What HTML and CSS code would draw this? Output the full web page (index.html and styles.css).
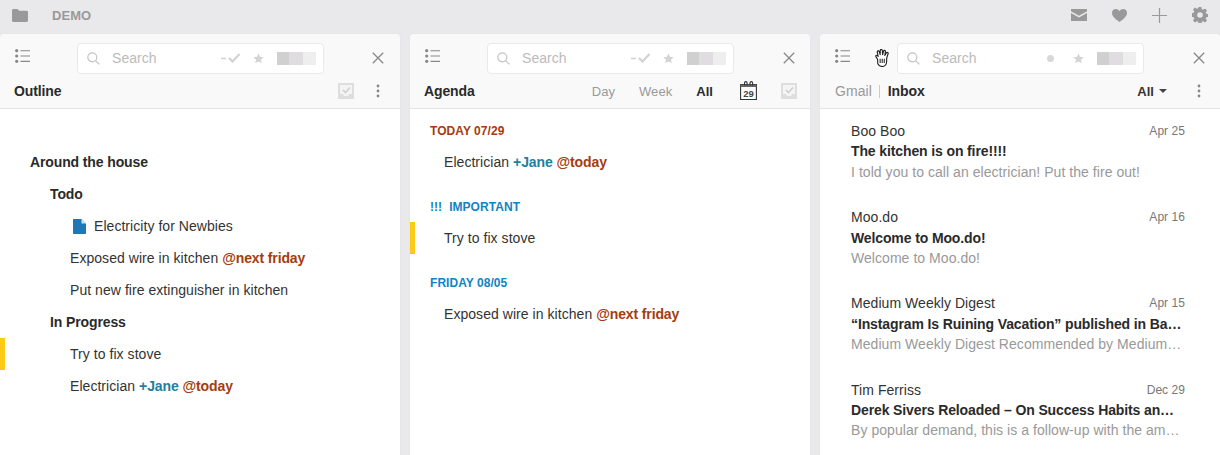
FILE: index.html
```html
<!DOCTYPE html>
<html lang="en">
<head>
  <meta charset="UTF-8" />
  <title>Moo.do</title>
  <link rel="stylesheet" href="styles.css">
</head>
<body>

  <svg class="sprites" width="0" height="0">
    <symbol id="i-list" viewBox="0 0 15 14">
      <circle cx="1.7" cy="1.7" r="1.6" /><circle cx="1.7" cy="7" r="1.6" /><circle cx="1.7" cy="12.3" r="1.6" />
      <path d="M5.500 1.200h9.500v1.100h-9.500zM5.500 6.500h9.500v1.100h-9.500zM5.500 11.800h9.500v1.100h-9.500z" />
    </symbol>
    <symbol id="i-search" viewBox="0 0 13 13">
      <circle cx="5.300" cy="5.300" r="4.500" fill="none" stroke="currentColor" stroke-width="1.200" />
      <path d="M8.600 8.600l3.800 3.800" fill="none" stroke="currentColor" stroke-width="1.300" />
    </symbol>
    <symbol id="i-dashcheck" viewBox="0 0 20 10">
      <path d="M0 5.500h5" fill="none" stroke="currentColor" stroke-width="1.400" />
      <path d="M8 5l3.500 3.500 7-7.500" fill="none" stroke="currentColor" stroke-width="2.200" />
    </symbol>
    <symbol id="i-star" viewBox="0 0 12 12">
      <path d="M6 .5l1.700 3.700 4 .4-3 2.700.9 4L6 9.200l-3.600 2.100.9-4-3-2.700 4-.4z" />
    </symbol>
    <symbol id="i-close" viewBox="0 0 12 12">
      <path d="M.8.8l10.400 10.400M11.200.8L.8 11.200" fill="none" stroke="currentColor" stroke-width="1.300" />
    </symbol>
    <symbol id="i-checkbox" viewBox="0 0 16 16">
      <path d="M0 0h16v16H0z" fill="#dedede" />
      <path d="M2 2h12v9h-3l-1 2H6l-1-2H2z" fill="#f4f4f4" />
      <path d="M5 7l2.500 2.500L12 4.500" fill="none" stroke="#cfcfcf" stroke-width="1.600" />
    </symbol>
    <symbol id="i-kebab" viewBox="0 0 4 14">
      <circle cx="2" cy="2" r="1.400" /><circle cx="2" cy="7" r="1.400" /><circle cx="2" cy="12" r="1.400" />
    </symbol>
  </svg>

  <header class="topbar">
    <svg class="top-folder" width="16" height="13" viewBox="0 0 16 13"><path d="M0 1.500C0 .7.6 0 1.400 0h4.100l1.600 1.800h7.500c.8 0 1.400.6 1.400 1.400v8.400c0 .8-.6 1.400-1.400 1.400H1.400C.6 13 0 12.400 0 11.600z" /></svg>
    <span class="top-name">DEMO</span>
    <div class="top-icons">
      <svg width="16" height="12" viewBox="0 0 16 12"><path d="M0 0h16v2.200L8 6.800 0 2.200zM0 4l8 4.600L16 4v8H0z" /></svg>
      <svg width="15" height="13" viewBox="0 0 15 13"><path d="M7.500 13C3 9.500 0 7 0 3.900 0 1.700 1.700 0 3.800 0c1.500 0 2.900.8 3.700 2.100C8.300.8 9.700 0 11.200 0 13.300 0 15 1.700 15 3.900 15 7 12 9.500 7.500 13z" /></svg>
      <svg width="15" height="15" viewBox="0 0 15 15"><path d="M6.900 0h1.200v6.900H15v1.200H8.100V15H6.900V8.100H0V6.900h6.900z" /></svg>
      <svg width="16" height="16" viewBox="0 0 16 16"><path fill-rule="evenodd" d="M6.600 0h2.800l.4 2.200 1.300.6 1.900-1.300 2 2-1.300 1.900.6 1.300 2.200.4v2.800l-2.200.4-.6 1.300 1.300 1.900-2 2-1.900-1.300-1.300.6-.4 2.200H6.600l-.4-2.200-1.300-.6L3 15.500l-2-2 1.300-1.900-.6-1.300L-.5 9.900V6.100l2.200-.4.6-1.300L1 2.500l2-2 1.900 1.300 1.300-.6zM8 5.200a2.800 2.800 0 1 0 0 5.600 2.800 2.800 0 0 0 0-5.600z" /></svg>
    </div>
  </header>

  <main class="panels">

    <section class="panel">
      <div class="panel-head">
        <div class="tool-row">
          <svg class="ico-list" width="15" height="14"><use href="#i-list" /></svg>
          <div class="search">
            <svg class="search-glass" width="13" height="13"><use href="#i-search" /></svg>
            <span class="search-text">Search</span>
            <svg class="search-done" width="20" height="10"><use href="#i-dashcheck" /></svg>
            <svg class="search-star" width="11" height="11"><use href="#i-star" /></svg>
            <span class="search-blur"></span>
          </div>
          <svg class="ico-close" width="12" height="12"><use href="#i-close" /></svg>
        </div>
        <div class="title-row">
          <span class="title">Outline</span>
          <svg class="ico-check" width="16" height="16"><use href="#i-checkbox" /></svg>
          <svg class="ico-kebab" width="4" height="14"><use href="#i-kebab" /></svg>
        </div>
      </div>
      <div class="outline">
        <div class="row lvl0 strong">Around the house</div>
        <div class="row lvl1 strong">Todo</div>
        <div class="row lvl2 doc">
          <svg width="13" height="15" viewBox="0 0 13 15"><path d="M1 0h7.500L13 4.500V14c0 .6-.4 1-1 1H1c-.6 0-1-.4-1-1V1c0-.6.4-1 1-1z" fill="#1f78b6" /><path d="M8.500 0v4.500H13z" fill="#cfe3f1" /></svg>
          Electricity for Newbies
        </div>
        <div class="row lvl2">Exposed wire in kitchen <b class="when">@next friday</b></div>
        <div class="row lvl2">Put new fire extinguisher in kitchen</div>
        <div class="row lvl1 strong">In Progress</div>
        <div class="row lvl2 flagged">Try to fix stove</div>
        <div class="row lvl2">Electrician <b class="who">+Jane</b> <b class="when">@today</b></div>
      </div>
    </section>

    <section class="panel">
      <div class="panel-head">
        <div class="tool-row">
          <svg class="ico-list" width="15" height="14"><use href="#i-list" /></svg>
          <div class="search">
            <svg class="search-glass" width="13" height="13"><use href="#i-search" /></svg>
            <span class="search-text">Search</span>
            <svg class="search-done" width="20" height="10"><use href="#i-dashcheck" /></svg>
            <svg class="search-star" width="11" height="11"><use href="#i-star" /></svg>
            <span class="search-blur"></span>
          </div>
          <svg class="ico-close" width="12" height="12"><use href="#i-close" /></svg>
        </div>
        <div class="title-row agenda-title">
          <span class="title">Agenda</span>
          <div class="tabs">
            <span>Day</span>
            <span>Week</span>
            <span class="on">All</span>
          </div>
          <svg class="ico-cal" width="17" height="19" viewBox="0 0 17 19">
            <path d="M.6 3.500h15.800v15H.6z" fill="#fff" stroke="#333" stroke-width="1.100" />
            <path d="M.6 3.500h15.800v2.500H.6z" fill="#666" />
            <path d="M4.500 4.500V1.900a1.300 1.300 0 0 1 2.600 0v2.600M10 4.500V1.900a1.300 1.300 0 0 1 2.600 0v2.600" fill="none" stroke="#333" stroke-width="1.100" />
            <text x="8.500" y="16" text-anchor="middle" class="cal-num">29</text>
          </svg>
          <svg class="ico-check" width="16" height="16"><use href="#i-checkbox" /></svg>
        </div>
      </div>
      <div class="agenda">
        <h4 class="group today">TODAY 07/29</h4>
        <div class="row agenda-row">Electrician <b class="who">+Jane</b> <b class="when">@today</b></div>
        <h4 class="group soon"><span class="bangs">!!!</span>IMPORTANT</h4>
        <div class="row agenda-row flagged">Try to fix stove</div>
        <h4 class="group soon">FRIDAY 08/05</h4>
        <div class="row agenda-row">Exposed wire in kitchen <b class="when">@next friday</b></div>
      </div>
    </section>

    <section class="panel">
      <svg class="grab-hand" width="16" height="18" viewBox="1.800 .5 13 17.500">
        <path d="M4 10.500L2.500 8.200C1.700 7 3 6 4 7l.6.800-.9-4.300c-.2-1.300 1.500-1.700 1.900-.4L6.500 6 6.600 2c0-1.400 1.900-1.400 2 0l.3 4 .9-3.400c.3-1.200 2-.9 1.800.4L11 6.800l1.500-2.500c.7-1.100 2.200-.3 1.700.8l-1.400 4.500v3c0 2.700-1.800 4.900-4.500 4.900-2.100 0-3.300-1-4.100-2.600z" fill="#fff" stroke="#222" stroke-width="1.100" stroke-linejoin="round" />
        <path d="M6.500 10v4M8.500 10v4M10.500 10v4" fill="none" stroke="#222" stroke-width="1" />
      </svg>
      <div class="panel-head">
        <div class="tool-row">
          <svg class="ico-list" width="15" height="14"><use href="#i-list" /></svg>
          <div class="search">
            <svg class="search-glass" width="13" height="13"><use href="#i-search" /></svg>
            <span class="search-text">Search</span>
            <span class="search-dot"></span>
            <svg class="search-star" width="11" height="11"><use href="#i-star" /></svg>
            <span class="search-blur"></span>
          </div>
          <svg class="ico-close" width="12" height="12"><use href="#i-close" /></svg>
        </div>
        <div class="title-row">
          <span class="crumb">Gmail</span>
          <span class="crumb-sep"></span>
          <span class="title">Inbox</span>
          <span class="filter">All<i class="caret"></i></span>
          <svg class="ico-kebab" width="4" height="14"><use href="#i-kebab" /></svg>
        </div>
      </div>
      <div class="inbox">
        <article class="mail">
          <div class="mail-top"><span>Boo Boo</span><time>Apr 25</time></div>
          <div class="mail-subject">The kitchen is on fire!!!!</div>
          <div class="mail-preview">I told you to call an electrician! Put the fire out!</div>
        </article>
        <article class="mail">
          <div class="mail-top"><span>Moo.do</span><time>Apr 16</time></div>
          <div class="mail-subject">Welcome to Moo.do!</div>
          <div class="mail-preview">Welcome to Moo.do!</div>
        </article>
        <article class="mail">
          <div class="mail-top"><span>Medium Weekly Digest</span><time>Apr 15</time></div>
          <div class="mail-subject">“Instagram Is Ruining Vacation” published in Ba…</div>
          <div class="mail-preview">Medium Weekly Digest Recommended by Medium…</div>
        </article>
        <article class="mail">
          <div class="mail-top"><span>Tim Ferriss</span><time>Dec 29</time></div>
          <div class="mail-subject">Derek Sivers Reloaded – On Success Habits an…</div>
          <div class="mail-preview">By popular demand, this is a follow-up with the am…</div>
        </article>
      </div>
    </section>

  </main>

</body>
</html>
```

FILE: styles.css
```css
html, body {
  height: 100%;
}

body {
  font-family: 'Liberation Sans', Arial, sans-serif;
  font-size: 14px;
  letter-spacing: 0.05px;
  background: #e9e9eb;
  margin: 0;
  color: #333;
  overflow: hidden;
  display: flex;
  flex-direction: column;
}

b, .strong, .title, .mail-subject {
  letter-spacing: -0.12px;
}

.sprites {
  display: none;
}

/* top bar */
.topbar {
  height: 34px;
  flex: none;
  display: flex;
  align-items: center;
  padding: 0 12px;
  box-sizing: border-box;
  fill: #999;
  color: #999;
}

.top-folder {
  margin-top: -3px;
}

.top-name {
  font-size: 13px;
  font-weight: bold;
  margin-left: 24px;
  margin-top: -3px;
}

.top-icons {
  margin-left: auto;
  display: flex;
  align-items: center;
  gap: 25px;
  margin-top: -4px;
}

/* panels */
.panels {
  flex: 1;
  min-height: 0;
  display: flex;
  gap: 10px;
}

.panel {
  flex: 1;
  min-width: 0;
  position: relative;
  background: #fff;
  border-radius: 4px 4px 0 0;
  box-shadow: 0 0 1px rgba(0,0,0,0.12);
  overflow: hidden;
}

.panel-head {
  height: 75px;
  box-sizing: border-box;
  background: #f9f9f9;
  border-bottom: 1px solid #e4e4e4;
}

.tool-row {
  height: 40px;
  display: flex;
  align-items: center;
  padding: 8px 16px 0 15px;
  box-sizing: border-box;
}

.panel + .panel .tool-row {
  padding-right: 15px;
}

.ico-list {
  fill: #888;
  margin-top: -4px;
}

.search {
  width: 247px;
  height: 31px;
  box-sizing: border-box;
  margin-left: 47px;
  display: flex;
  align-items: center;
  background: #fff;
  border: 1px solid #e9e9e9;
  border-radius: 4px;
  color: #c4c4c4;
  fill: #d4d4d4;
}

.search-glass {
  margin-left: 9px;
}

.search-text {
  margin-left: 12px;
  color: #bbb;
}

.search-done {
  margin-left: auto;
  color: #d2d2d2;
}

.search-dot {
  margin-left: auto;
  width: 7px;
  height: 7px;
  border-radius: 50%;
  background: #d8d8d8;
  margin-right: 7px;
}

.search-star {
  margin-left: 12px;
}

.search-blur {
  width: 39px;
  height: 13px;
  margin: 0 7px 0 13px;
  background: linear-gradient(90deg, #d0d0d0 0 30%, #e0dde0 30% 66%, #eeeeee 66%);
}

.ico-close {
  margin-left: auto;
  margin-top: -1px;
  color: #888;
}

.title-row {
  height: 34px;
  display: flex;
  align-items: center;
  padding: 0 20px 0 14px;
  box-sizing: border-box;
}

.panel + .panel .title-row {
  padding-right: 19px;
}

.panel + .panel .agenda-title {
  padding-right: 13px;
}

.title {
  font-weight: bold;
  color: #2a2a2a;
}

.ico-check {
  margin-left: auto;
}

.ico-kebab {
  fill: #888;
  margin-left: 22px;
}

.tabs {
  margin-left: auto;
  display: flex;
  gap: 24px;
  font-size: 13px;
  color: #999;
}

.tabs .on {
  color: #2a2a2a;
  font-weight: bold;
}

.ico-cal {
  margin-left: 27px;
  margin-top: -1px;
}

.cal-num {
  font-size: 9.500px;
  font-weight: bold;
  fill: #444;
  letter-spacing: 0;
}

.title-row .ico-cal + .ico-check {
  margin-left: 24px;
}

.crumb {
  color: #999;
  margin-left: 1px;
}

.crumb-sep {
  width: 1px;
  height: 13px;
  background: #ccc;
  margin: 0 8px 0 7px;
}

.filter {
  margin-left: auto;
  font-weight: bold;
  color: #333;
  font-size: 13px;
  display: flex;
  align-items: center;
}

.caret {
  border: 4px solid transparent;
  border-top: 4px solid #444;
  border-bottom: 0;
  margin-left: 5px;
}

.filter + .ico-kebab {
  margin-left: 30px;
}

.grab-hand {
  position: absolute;
  left: 54px;
  top: 15px;
}

/* rows */
.row {
  height: 32px;
  line-height: 32px;
  white-space: nowrap;
}

.strong {
  font-weight: bold;
  color: #2a2a2a;
}

.flagged {
  box-shadow: inset 5px 0 0 #fdcb17;
}

.when {
  color: #a53c0d;
}

.who {
  color: #1e7f9e;
}

.outline {
  padding-top: 37px;
}

.lvl0 {
  padding-left: 30px;
}

.lvl1 {
  padding-left: 50px;
}

.lvl2 {
  padding-left: 70px;
}

.doc {
  display: flex;
  align-items: center;
  padding-left: 73px;
}

.doc svg {
  margin-right: 8px;
}

/* agenda */
.agenda {
  padding-top: 5px;
}

.group {
  height: 32px;
  line-height: 34px;
  margin: 12px 0 0;
  padding-left: 20px;
  font-size: 12px;
}

.group:first-child {
  margin-top: 0;
}

.today {
  color: #a53c0d;
}

.soon {
  color: #0f84c4;
}

.bangs {
  margin-right: 7px;
}

.agenda-row {
  padding-left: 34px;
}

/* inbox */
.mail {
  padding: 12px 35px 13px 31px;
  line-height: 20.400px;
}

.mail-top {
  height: 20.400px;
  display: flex;
  justify-content: space-between;
}

.mail-top time {
  font-size: 12px;
  color: #777;
}

.mail-subject {
  font-weight: bold;
  color: #2a2a2a;
  white-space: nowrap;
}

.mail-preview {
  color: #999;
  white-space: nowrap;
}
```
